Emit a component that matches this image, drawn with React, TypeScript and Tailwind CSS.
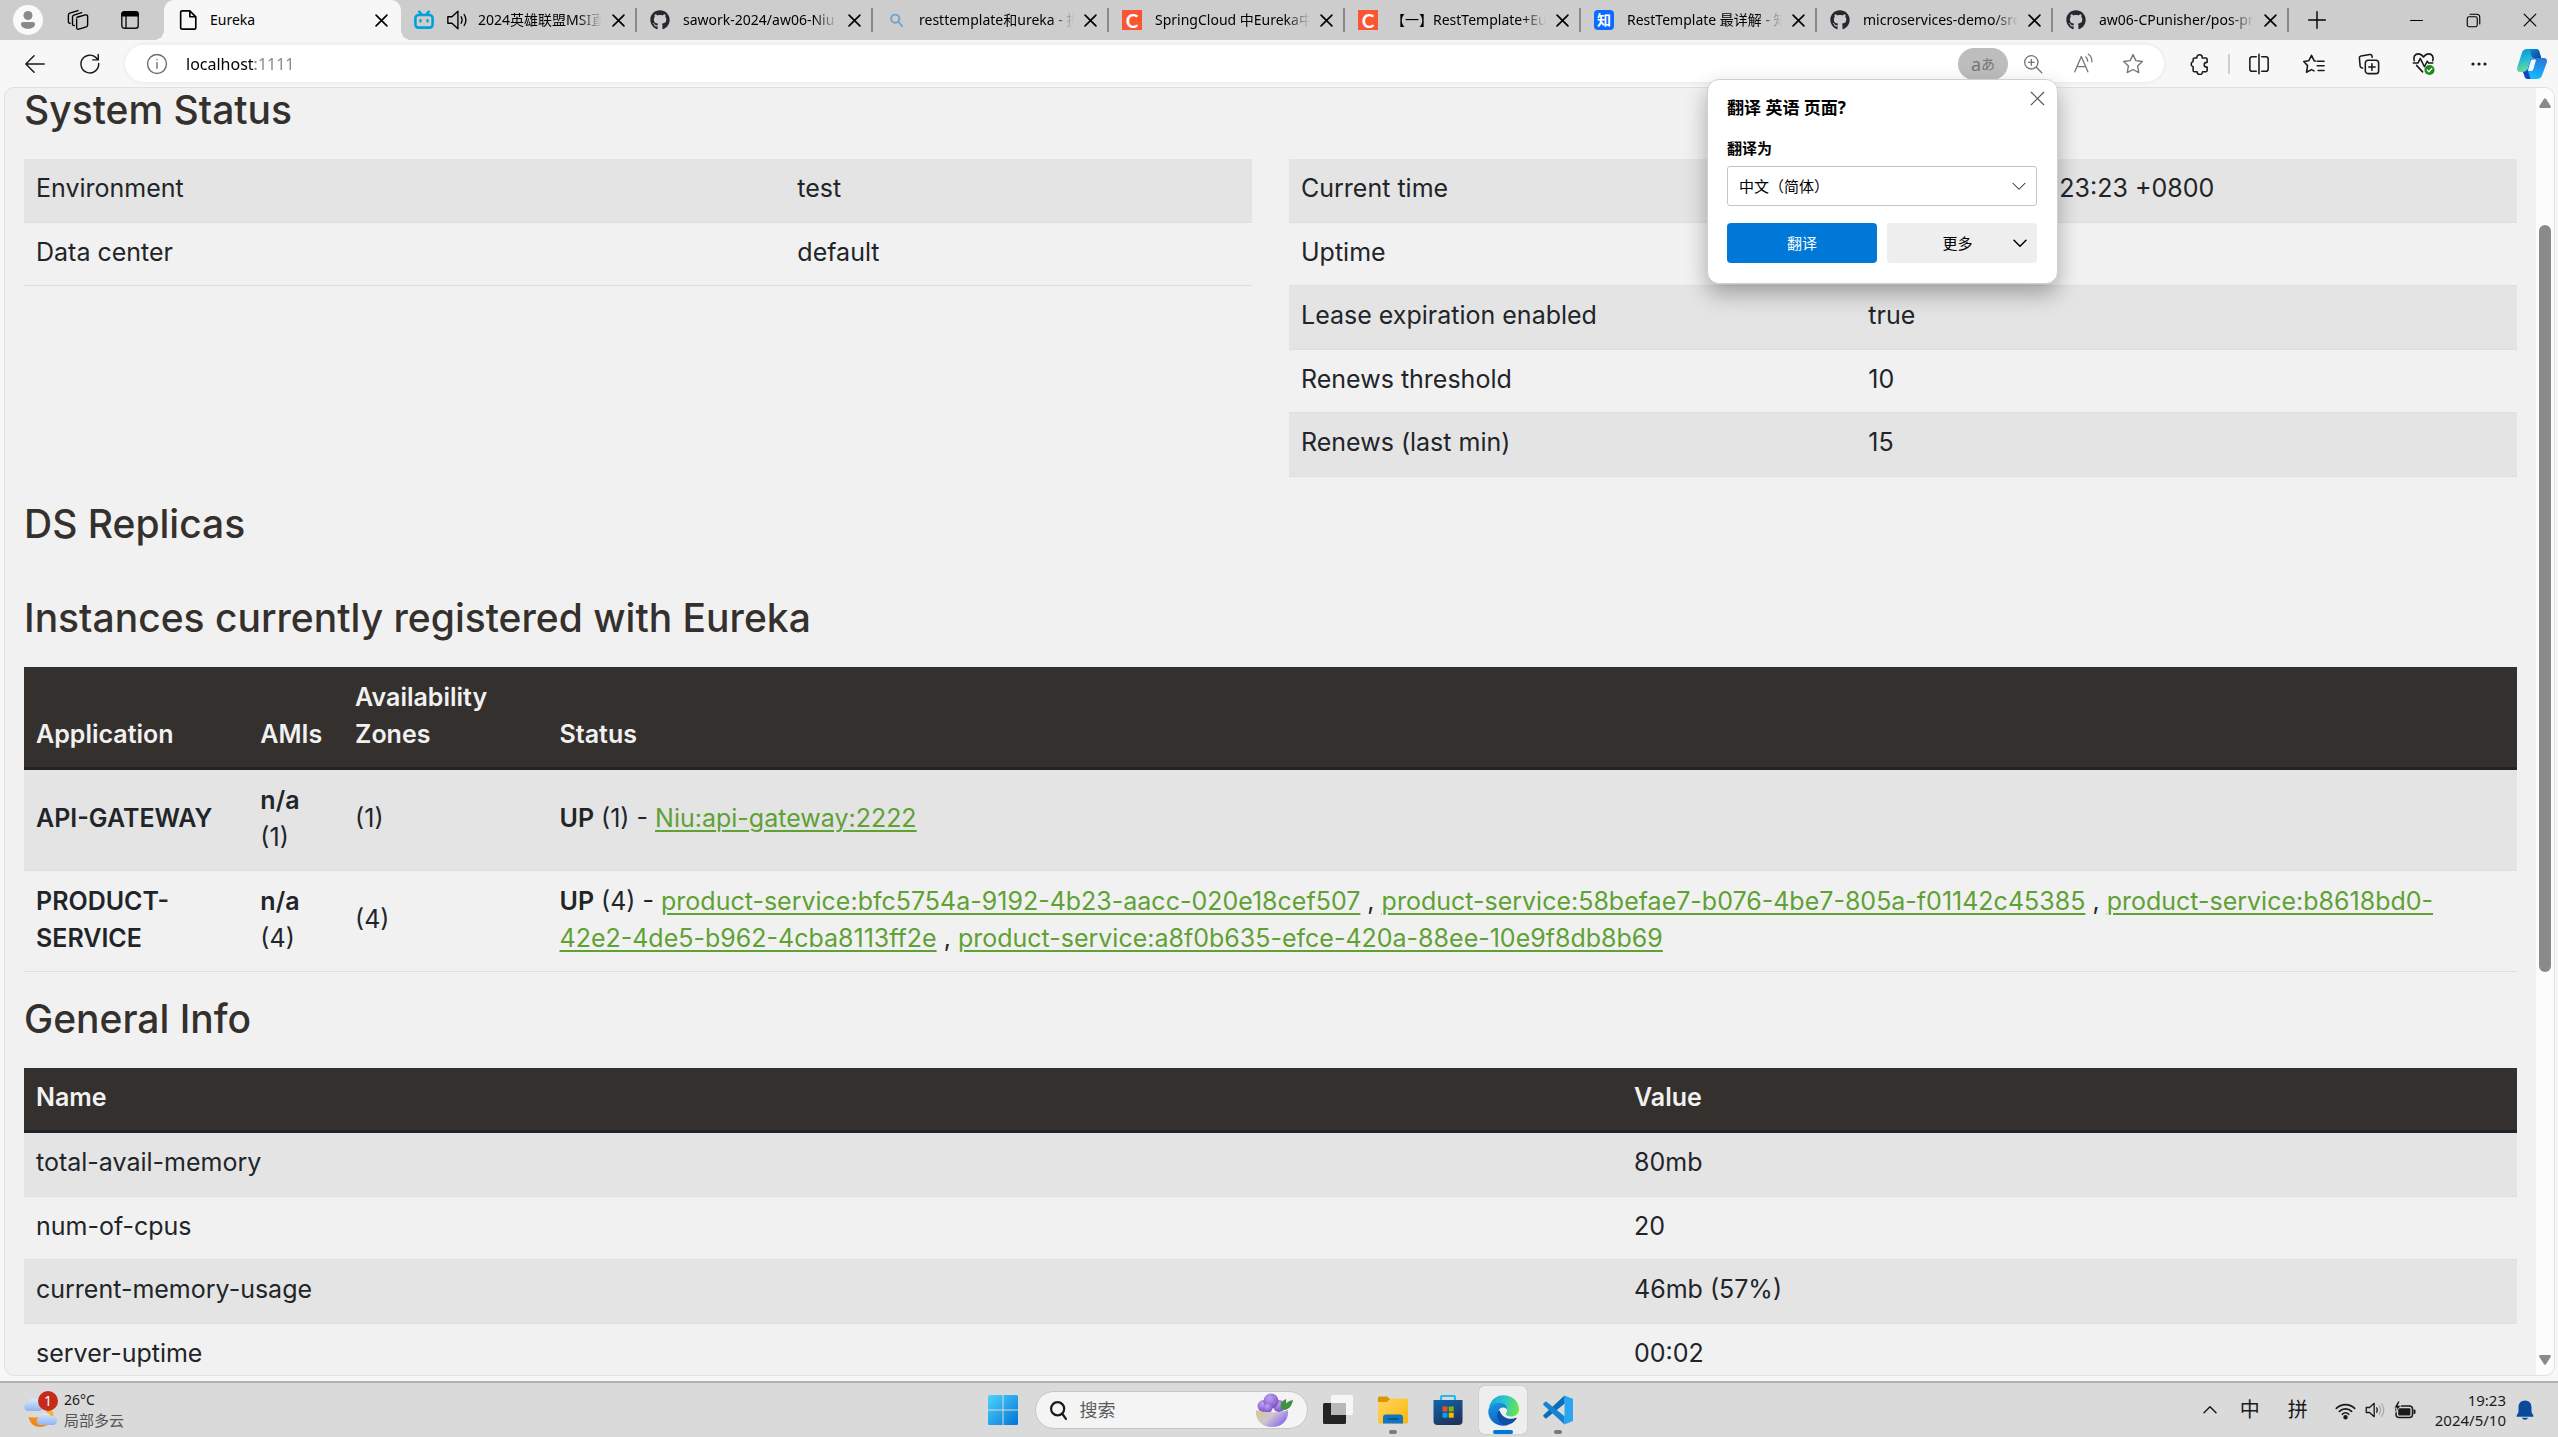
import React from 'react';
import type { ReactNode } from 'react';
import { FaGithub } from 'react-icons/fa';

const UI = "font-['Noto_Sans','Noto_Sans_CJK_SC',sans-serif]";

function Line({ children, size = 'size-[22px]', w = 1.4 }: { children: ReactNode; size?: string; w?: number }) {
  return (
    <svg viewBox="0 0 24 24" className={size} fill="none" stroke="currentColor" strokeWidth={w} strokeLinecap="round" strokeLinejoin="round" aria-hidden="true">
      {children}
    </svg>
  );
}

const Cross = ({ size = 'size-[13px]', w = 3 }: { size?: string; w?: number }) => (
  <Line size={size} w={w}>
    <path d="M2 2l20 20M22 2L2 22" />
  </Line>
);

/* ---------- tab strip ---------- */

const Bilibili = () => (
  <svg viewBox="0 0 20 20" className="size-5 shrink-0" fill="none" stroke="#00a1d6" strokeWidth="2.6" strokeLinecap="round" aria-hidden="true">
    <path d="M5.3 1.8l2 2.4M14.7 1.8l-2 2.4" />
    <rect x="1.4" y="5" width="17.2" height="12.6" rx="3" />
    <path d="M6.5 10v1.6M13.5 10v1.6" strokeWidth="2.2" />
  </svg>
);

const Sound = () => (
  <Line size="size-[22px] shrink-0" w={1.5}>
    <path d="M2 8.5h4.5L13 2.5v19l-6.500-6H2z" />
    <path d="M16.500 8.500c1.300 2.200 1.300 4.800 0 7M19.800 6c2.300 3.600 2.300 8.400 0 12" />
  </Line>
);

const Csdn = () => <span className="grid size-5 shrink-0 place-items-center bg-[#fc5531] font-['Lato',sans-serif] text-[19px] leading-none font-bold text-white">C</span>;
const Zhihu = () => <span className="grid size-5 shrink-0 place-items-center rounded-[4px] bg-[#0a6cff] text-sm leading-none font-bold text-white">知</span>;
const Github = () => <FaGithub className="size-5 shrink-0 text-[#24292f]" />;
const SearchFav = () => (
  <span className="grid size-5 shrink-0 place-items-center text-[#6fa3cf]">
    <Line size="size-[15px]" w={3}>
      <circle cx="10" cy="9" r="6.500" />
      <path d="M15 14l6 7" />
    </Line>
  </span>
);
const PageFav = () => (
  <Line size="size-[22px] shrink-0" w={1.8}>
    <path d="M4 3.500C4 2.500 4.800 2 5.500 2H14l6.500 6.500V20.500c0 .9-.7 1.500-1.500 1.500H5.500C4.600 22 4 21.400 4 20.500zM14 2v6.500h6.500" />
  </Line>
);

const TABS: { title: string; icon: ReactNode; sound?: boolean }[] = [
  { title: '2024英雄联盟MSI直', icon: <Bilibili />, sound: true },
  { title: 'sawork-2024/aw06-Niu', icon: <Github /> },
  { title: 'resttemplate和ureka - 搜', icon: <SearchFav /> },
  { title: 'SpringCloud 中Eureka中', icon: <Csdn /> },
  { title: '【一】RestTemplate+Eu', icon: <Csdn /> },
  { title: 'RestTemplate 最详解 - 知', icon: <Zhihu /> },
  { title: 'microservices-demo/src', icon: <Github /> },
  { title: 'aw06-CPunisher/pos-pr', icon: <Github /> },
];

function TabStrip() {
  return (
    <header className="flex h-10 shrink-0 items-stretch bg-[#cdcdcd] pl-[3px] text-sm text-black">
      <button aria-label="Profile" className="grid w-[50px] shrink-0 place-items-center">
        <svg viewBox="0 0 30 30" className="size-[30px]" aria-hidden="true">
          <circle cx="15" cy="15" r="15" fill="#fafafa" />
          <circle cx="15" cy="10.500" r="4.500" fill="#8a8a8a" />
          <path d="M8 19c0-1.200.9-2 2-2h10c1.100 0 2 .8 2 2 0 3.200-3.200 4.800-7 4.800S8 22.200 8 19z" fill="#8a8a8a" />
        </svg>
      </button>
      <button aria-label="Workspaces" className="grid w-[50px] shrink-0 place-items-center">
        <Line w={1.500}>
          <path d="M11 9l9-2.500c1.500-.4 2.500.4 2.500 1.500v9.500c0 1-.5 1.600-1.400 1.900L13 22c-1.500.4-2.500-.4-2.500-1.500V10.800" />
          <path d="M8 18c-1.200.3-2-.4-2-1.500V8.500c0-1 .6-1.600 1.500-1.900L16 4" />
          <path d="M3.500 15.500C2.300 15.700 1.500 15 1.500 14V6.500c0-1 .6-1.600 1.500-1.900L12 1.700" />
        </Line>
      </button>
      <button aria-label="Tab actions" className="grid w-[54px] shrink-0 place-items-center">
        <svg viewBox="0 0 20 20" className="size-5" aria-hidden="true">
          <rect x="1.800" y="1.800" width="16.400" height="16.400" rx="2.500" fill="none" stroke="#111" strokeWidth="1.400" />
          <path d="M1.200 6.500V4c0-1.600 1.200-2.800 2.800-2.800h12c1.600 0 2.800 1.200 2.800 2.800v2.500z" fill="#000" />
          <path d="M6 6v12" stroke="#111" strokeWidth="1.400" />
        </svg>
      </button>

      <nav aria-label="Tabs" className="ml-[7px] flex min-w-0 items-stretch">
        <div className="relative flex w-[237px] items-center rounded-t-[10px] bg-[#f7f7f7] pl-[13px]">
          <span className="absolute bottom-0 -left-[10px] size-[10px] bg-[radial-gradient(circle_at_0_0,#cdcdcd_10px,#f7f7f7_10px)]" />
          <span className="absolute -right-[10px] bottom-0 size-[10px] bg-[radial-gradient(circle_at_100%_0,#cdcdcd_10px,#f7f7f7_10px)]" />
          <PageFav />
          <button className="ml-[11px] flex-1 text-left">Eureka</button>
          <button aria-label="Close tab" className="mr-1 grid h-8 w-8 place-items-center">
            <Cross />
          </button>
        </div>
        {TABS.map((t) => (
          <div key={t.title} className="flex w-[236px] min-w-0 items-center pl-[13px]">
            {t.icon}
            {t.sound && (
              <span className="ml-3 flex">
                <Sound />
              </span>
            )}
            <button className={`${t.sound ? 'ml-[10px]' : 'ml-[13px]'} min-w-0 flex-1 overflow-hidden text-left whitespace-nowrap [mask-image:linear-gradient(to_right,black_calc(100%-24px),transparent)]`}>{t.title}</button>
            <button aria-label={`Close ${t.title}`} className="mr-[4px] ml-[3px] grid h-8 w-[26px] shrink-0 place-items-center">
              <Cross />
            </button>
            <span className="h-6 w-[2px] bg-[#8a8a8a]" />
          </div>
        ))}
      </nav>
      <button aria-label="New tab" className="grid w-14 shrink-0 place-items-center">
        <Line size="size-5" w={1.700}>
          <path d="M12 2v20M2 12h20" />
        </Line>
      </button>
      <div className="ml-auto flex shrink-0">
        <button aria-label="Minimize" className="grid w-[57px] place-items-center">
          <Line size="size-[13px]" w={2}>
            <path d="M1 12h22" />
          </Line>
        </button>
        <button aria-label="Restore" className="grid w-[57px] place-items-center">
          <Line size="size-[15px]" w={1.800}>
            <rect x="2" y="6" width="16" height="16" rx="3" />
            <path d="M6.500 2H17c3 0 5 2 5 5v10.500" />
          </Line>
        </button>
        <button aria-label="Close window" className="grid w-14 place-items-center">
          <Cross size="size-[14px]" w={2} />
        </button>
      </div>
    </header>
  );
}

/* ---------- address bar ---------- */

const Copilot = () => (
  <svg viewBox="0 0 30 32" className="h-8 w-[30px]" aria-hidden="true">
    <defs>
      <linearGradient id="cpA" x1="0" y1="0" x2="0.300" y2="1">
        <stop offset="0" stopColor="#0b8fd6" />
        <stop offset="0.500" stopColor="#22b8d8" />
        <stop offset="1" stopColor="#6fe08a" />
      </linearGradient>
      <linearGradient id="cpB" x1="0.600" y1="0" x2="0.300" y2="1">
        <stop offset="0" stopColor="#2a78d8" />
        <stop offset="0.600" stopColor="#1aa4f5" />
        <stop offset="1" stopColor="#12c2ff" />
      </linearGradient>
      <linearGradient id="cpC" x1="0" y1="0" x2="1" y2="1">
        <stop offset="0" stopColor="#0a8bd8" />
        <stop offset="1" stopColor="#0b3f9c" />
      </linearGradient>
    </defs>
    <path d="M10 1h9c2 0 3 1.200 3.500 3l1.700 6H16c-2 0-3 1-3.500 3l-2.200 8c-.6 2-1.800 3-3.800 3H3c-2.500 0-3.400-2-2.800-4.500L5 4.500C5.700 2.200 7.500 1 10 1z" fill="url(#cpA)" />
    <path d="M13 1h6c2 0 3 1.200 3.500 3l1.700 6H18c-2.500 0-3.500-1-4-3z" fill="url(#cpC)" />
    <path d="M20 31h-9c-2 0-3-1.200-3.500-3L6 23.800c2 0 3.600-.8 4.300-2.800l2.200-8c.5-2 1.500-3 3.500-3h11c2.500 0 3.400 2 2.800 4.500L25 27.500c-.7 2.300-2.500 3.500-5 3.500z" fill="url(#cpB)" />
    <path d="M13.500 31H11c-2 0-3-1.200-3.500-3L6 23.800c2 0 3.500-.8 4.300-2.800z" fill="#1644c4" />
    <path d="M15.500 11.500h2.300c.9 0 1.200.6.900 1.500l-2.300 8c-.4 1.300-1 2-2.300 2h-2c-.8 0-1.100-.6-.8-1.500l2.300-8c.3-1.300.9-2 1.900-2z" fill="#f4fbff" />
  </svg>
);

function AddressBar() {
  const box = 'grid w-[55px] place-items-center';
  return (
    <div className="flex h-[47px] shrink-0 items-center bg-[#f7f7f7] text-[#1a1a1a]">
      <button aria-label="Back" className="ml-[7px] grid w-[55px] place-items-center">
        <Line w={1.600}>
          <path d="M11 3L2 12l9 9M2 12h20" />
        </Line>
      </button>
      <button aria-label="Refresh" className={box}>
        <Line w={1.600}>
          <path d="M21.500 11.500A9.700 9.700 0 1 1 19 5.500L20.800 7.500M21 1.500v6h-6" />
        </Line>
      </button>
      <div className="ml-2 flex h-[37px] flex-1 items-center rounded-full bg-white pr-[6px] pl-[21px] shadow-[0_0_5px_rgba(0,0,0,0.08)]">
        <span className="text-[#6b6b6b]">
          <Line w={1.500}>
            <circle cx="12" cy="12" r="10.300" />
            <path d="M12 10.500v6M12 7.200v.2" />
          </Line>
        </span>
        <input
          aria-label="Address"
          defaultValue="localhost:1111"
          className="ml-[18px] min-w-0 flex-1 bg-[linear-gradient(to_right,#000_69px,#858585_69px)] bg-clip-text text-base text-transparent outline-none"
        />
        <div className="flex items-center text-[#767676]">
          <button aria-label="Translate" className="flex h-8 w-[50px] items-center justify-center rounded-full bg-[#bdbdbd]">
            <span className="text-lg leading-none">a</span>
            <span className="text-sm leading-none">あ</span>
          </button>
          <button aria-label="Zoom" className="grid w-[50px] place-items-center">
            <Line size="size-5" w={1.600}>
              <circle cx="10" cy="10" r="8" />
              <path d="M16 16l6.500 6.500M10 6.500v7M6.500 10h7" />
            </Line>
          </button>
          <button aria-label="Read aloud" className="grid w-[50px] place-items-center">
            <Line size="size-[21px]" w={1.500}>
              <path d="M2 21.500L9.500 4l7.500 17.500M4.700 15.500h9.600M14.500 4.500c1.500 1 2.300 2.800 2.300 4.800M17.500 1.500c2.800 1.800 4.300 5 4 8.500" />
            </Line>
          </button>
          <button aria-label="Favorite" className="grid w-[50px] place-items-center">
            <Line w={1.500}>
              <path d="M12 1.800l3.100 6.500 7.100 1-5.200 5 1.300 7.100L12 18l-6.300 3.400L7 14.300l-5.200-5 7.100-1z" />
            </Line>
          </button>
        </div>
      </div>
      <button aria-label="Extensions" className={`ml-2 ${box}`}>
        <Line w={1.700}>
          <path d="M8.500 5.500V5a3 3 0 0 1 6 0v.5h3.800c.9 0 1.500.6 1.500 1.500v3.200h-.6a2.600 2.600 0 0 0 0 5.200h.6V19c0 .9-.6 1.500-1.500 1.500h-3.500a3 3 0 0 1-6 0H6c-.9 0-1.500-.6-1.500-1.500v-4a2.900 2.900 0 0 1 0-5.600V7c0-.9.6-1.500 1.500-1.500z" />
        </Line>
      </button>
      <span className="mx-px h-5 w-[2px] bg-[#cfcfcf]" />
      <button aria-label="Split screen" className={box}>
        <Line w={1.700}>
          <path d="M9 4H4.500C3.100 4 2 5.100 2 6.500v11C2 18.900 3.100 20 4.500 20H9M15 4h4.500C20.900 4 22 5.100 22 6.500v11c0 1.400-1.100 2.500-2.500 2.500H15M12 1.500v21" />
        </Line>
      </button>
      <button aria-label="Favorites" className={box}>
        <Line w={1.700}>
          <path d="M15.500 9H23M15.500 14H23M16.500 19H23" />
          <path d="M13.500 8.800l-1.300-.2L9.300 2.500 6.400 8.400l-5.600.9 4.200 4.500-1.200 7.200 5.500-2.900 2.700 1.400" />
        </Line>
      </button>
      <button aria-label="Collections" className={box}>
        <Line w={1.700}>
          <rect x="8" y="8" width="14.500" height="14.500" rx="3" />
          <path d="M15.200 11.700v7M11.700 15.200h7M5 16.500l-1.500-.7c-.7-.4-1-1-1.200-1.700L1.500 5.500C1.400 4.300 2 3.500 3.200 3.300L13 1.600c1.200-.2 2 .5 2.200 1.600l.3 1.500" />
        </Line>
      </button>
      <button aria-label="Browser essentials" className={box}>
        <svg viewBox="0 0 24 26" className="h-6 w-[23px]" fill="none" stroke="currentColor" strokeWidth="1.700" strokeLinecap="round" strokeLinejoin="round" aria-hidden="true">
          <path d="M2 9.500C.5 5 3 2 6.300 2c2.300 0 4.300 1.300 5.700 3.500C13.400 3.300 15.400 2 17.700 2 21 2 23.500 5 22 9.500M4.500 14.500L11 21.500" />
          <path d="M1 12h5l2.500-5 4.500 9 3-6 1.500 2H22" />
          <circle cx="18.500" cy="19.500" r="5.500" fill="#1a8a1a" stroke="none" />
          <path d="M16 19.600l1.800 1.800 3.200-3.600" stroke="#fff" strokeWidth="1.500" />
        </svg>
      </button>
      <button aria-label="More tools" className={box}>
        <svg viewBox="0 0 16 4" className="h-1 w-4" fill="currentColor" aria-hidden="true">
          <circle cx="2" cy="2" r="1.600" />
          <circle cx="8" cy="2" r="1.600" />
          <circle cx="14" cy="2" r="1.600" />
        </svg>
      </button>
      <button aria-label="Copilot" className="grid w-[52px] place-items-center">
        <Copilot />
      </button>
    </div>
  );
}

/* ---------- translate popup ---------- */

const Chevron = ({ w = 1.500 }: { w?: number }) => (
  <Line size="size-4" w={w}>
    <path d="M3 8l9 9 9-9" />
  </Line>
);

function TranslatePopup() {
  return (
    <section
      aria-label="Translate"
      className="absolute top-[79px] right-[500px] flex w-[351px] flex-col rounded-xl border border-[#d0d0d0] bg-white pr-5 pb-5 pl-[19px] text-[15px] text-black shadow-[0_10px_22px_rgba(0,0,0,0.3)]"
    >
      <div className="flex h-[55px] items-center justify-between">
        <h2 className="text-[17px] font-bold">翻译 英语 页面?</h2>
        <button aria-label="Close" className="-mt-[18px] -mr-2 text-[#555]">
          <Cross size="size-[15px]" w={1.800} />
        </button>
      </div>
      <label htmlFor="lang" className="h-[31px] leading-[26px] font-bold">
        翻译为
      </label>
      <div className="relative">
        <select id="lang" className="h-10 w-full appearance-none rounded-[3px] border border-[#c4c4c4] bg-white pl-[11px]">
          <option>中文（简体）</option>
        </select>
        <span className="pointer-events-none absolute top-3 right-[10px]">
          <Chevron />
        </span>
      </div>
      <div className="mt-[17px] grid grid-cols-2 gap-[10px]">
        <button className="h-10 rounded-[4px] bg-[#0078d7] text-white">翻译</button>
        <button className="flex h-10 items-center rounded-[4px] bg-[#eeeeee] pr-[9px]">
          <span className="flex-1 pl-4">更多</span>
          <Chevron w={2.200} />
        </button>
      </div>
    </section>
  );
}

/* ---------- Eureka page ---------- */

const H = 'mt-[25px] mb-[27px] text-[39px] leading-[44px] font-medium text-[#34302d]';
const TABLE = 'w-full table-fixed border-separate border-spacing-0 text-left';
const TD = 'border-b border-[#dedee2] px-3 pt-[11px] pb-[14px] font-normal';
const TH = 'border-b-[3px] border-[#212529] bg-[#34302d] px-3 pt-[11px] pb-[14px] text-left align-bottom font-semibold text-[#f1f1f1]';
const ROW = 'odd:bg-[#e4e4e4] odd:h-16 even:h-[63px]';

function KeyValue({ rows, first }: { rows: [string, string][]; first: string }) {
  return (
    <tbody>
      {rows.map(([k, v]) => (
        <tr key={k} className={ROW}>
          <td className={`${TD} ${first} align-top`}>{k}</td>
          <td className={`${TD} align-top`}>{v}</td>
        </tr>
      ))}
    </tbody>
  );
}

const APPS = [
  { name: 'API-GATEWAY', n: 1, links: ['Niu:api-gateway:2222'] },
  {
    name: 'PRODUCT-SERVICE',
    n: 4,
    links: [
      'product-service:bfc5754a-9192-4b23-aacc-020e18cef507',
      'product-service:58befae7-b076-4be7-805a-f01142c45385',
      'product-service:b8618bd0-42e2-4de5-b962-4cba8113ff2e',
      'product-service:a8f0b635-efce-420a-88ee-10e9f8db8b69',
    ],
  },
];

function EurekaPage() {
  return (
    <main className="min-w-0 flex-1 overflow-hidden px-[19px] font-['Inter',sans-serif] text-[25px] leading-[37px] text-[#212529]">
      <h1 className="mb-[27px] text-[39px] leading-[44px] font-medium text-[#34302d]">System Status</h1>
      <div className="flex items-start gap-[37px]">
        <table className={TABLE}>
          <KeyValue first="w-[62%]" rows={[['Environment', 'test'], ['Data center', 'default']]} />
        </table>
        <table className={TABLE}>
          <KeyValue
            first="w-[46.2%]"
            rows={[
              ['Current time', '2024-05-10T19:23:23 +0800'],
              ['Uptime', '00:02'],
              ['Lease expiration enabled', 'true'],
              ['Renews threshold', '10'],
              ['Renews (last min)', '15'],
            ]}
          />
        </table>
      </div>
      <section className="pt-[25px] pb-[25px]">
        <h1 className="text-[39px] leading-[44px] font-medium text-[#34302d]">DS Replicas</h1>
      </section>
      <h1 className={H}>Instances currently registered with Eureka</h1>
      <table className={TABLE}>
        <thead>
          <tr className="h-[103px]">
            <th className={`${TH} w-[9%]`}>Application</th>
            <th className={`${TH} w-[3.8%]`}>AMIs</th>
            <th className={`${TH} w-[8.2%]`}>Availability Zones</th>
            <th className={TH}>Status</th>
          </tr>
        </thead>
        <tbody>
          {APPS.map((a) => (
            <tr key={a.name} className="h-[101px] odd:bg-[#e4e4e4]">
              <td className={TD}>
                <b className="font-semibold">{a.name}</b>
              </td>
              <td className={TD}>
                <b className="block font-semibold">n/a</b>({a.n})
              </td>
              <td className={TD}>({a.n})</td>
              <td className={TD}>
                <b className="font-semibold">UP</b> ({a.n}) -{' '}
                {a.links.map((l, i) => (
                  <React.Fragment key={l}>
                    {i > 0 && ' , '}
                    <a href="#info" className="text-[#5fa134] underline decoration-2 underline-offset-[3px]">
                      {l}
                    </a>
                  </React.Fragment>
                ))}
              </td>
            </tr>
          ))}
        </tbody>
      </table>
      <h1 className={H}>General Info</h1>
      <table className={TABLE}>
        <thead>
          <tr>
            <th className={`${TH} w-[64.1%]`}>Name</th>
            <th className={TH}>Value</th>
          </tr>
        </thead>
        <KeyValue
          first=""
          rows={[
            ['total-avail-memory', '80mb'],
            ['num-of-cpus', '20'],
            ['current-memory-usage', '46mb (57%)'],
            ['server-uptime', '00:02'],
          ]}
        />
      </table>
    </main>
  );
}

function ScrollBar() {
  return (
    <div className="flex w-[18px] shrink-0 flex-col items-center bg-[#fcfcfc] py-[10px]">
      <svg viewBox="0 0 12 10" className="h-[10px] w-3" fill="#8a8a8a" aria-hidden="true">
        <path d="M5 .8Q6 -.4 7 .8L11.600 8Q12.200 9.800 10.800 10H1.200Q-.2 9.800.4 8z" />
      </svg>
      <div className="flex w-3 flex-1 flex-col">
        <div className="flex-[117]" />
        <div className="flex-[748] rounded-full bg-[#8a8a8a]" />
        <div className="flex-[384]" />
      </div>
      <svg viewBox="0 0 12 10" className="h-[10px] w-3 rotate-180" fill="#8a8a8a" aria-hidden="true">
        <path d="M5 .8Q6 -.4 7 .8L11.600 8Q12.200 9.800 10.800 10H1.200Q-.2 9.800.4 8z" />
      </svg>
    </div>
  );
}

/* ---------- taskbar ---------- */

const Weather = () => (
  <span className="relative block h-[38px] w-[38px]">
    <svg viewBox="0 0 38 38" className="size-[38px]" aria-hidden="true">
      <defs>
        <linearGradient id="cloud" x1="0" y1="0" x2="0" y2="1">
          <stop offset="0" stopColor="#dbe9ff" />
          <stop offset="1" stopColor="#8fb4ee" />
        </linearGradient>
        <linearGradient id="moon" x1="1" y1="0" x2="0" y2="1">
          <stop offset="0" stopColor="#ffb52b" />
          <stop offset="1" stopColor="#ee7d0c" />
        </linearGradient>
      </defs>
      <path d="M4 20a4.200 4.200 0 0 1 .6-8 5.500 5.500 0 0 1 10.500-1A4.700 4.700 0 0 1 17 20z" fill="url(#cloud)" />
      <path d="M24 18c0 6-6 10-18.500 8 1.500 6.500 5.500 10 11.500 10 8 0 13.500-5.500 13.500-12 0-2.500-1.500-5-3.500-6z" fill="url(#moon)" />
      <path d="M17 34a4 4 0 0 1 .4-7.900 5.500 5.500 0 0 1 10.400-1A4.500 4.500 0 0 1 31 34z" fill="url(#cloud)" />
    </svg>
    <span className="absolute top-0 left-[15px] grid size-5 place-items-center rounded-full bg-[#c42b1c] text-sm leading-none text-white">1</span>
  </span>
);

const Start = () => (
  <svg viewBox="0 0 30 30" className="size-[30px]" aria-hidden="true">
    <defs>
      <linearGradient id="win" x1="0" y1="0" x2="1" y2="1">
        <stop offset="0" stopColor="#4fd4ff" />
        <stop offset="1" stopColor="#0273d4" />
      </linearGradient>
    </defs>
    <path d="M1.500 0H14.500V14.500H0V1.500Q0 0 1.500 0zM15.500 0H28.500Q30 0 30 1.500V14.500H15.500zM0 15.500H14.500V30H1.500Q0 30 0 28.500zM15.500 15.500H30V28.500Q30 30 28.500 30H15.500z" fill="url(#win)" />
  </svg>
);

const Berries = () => (
  <svg viewBox="0 0 40 36" className="h-9 w-10" aria-hidden="true">
    <defs>
      <linearGradient id="bowl" x1="0" y1="0" x2="1" y2="0.600">
        <stop offset="0" stopColor="#d8c48c" />
        <stop offset="0.500" stopColor="#cfc6cf" />
        <stop offset="1" stopColor="#8a6cf0" />
      </linearGradient>
      <radialGradient id="berry" cx="0.400" cy="0.300" r="0.800">
        <stop offset="0" stopColor="#c0a2f5" />
        <stop offset="1" stopColor="#7246bd" />
      </radialGradient>
    </defs>
    <circle cx="9.500" cy="14" r="6" fill="url(#berry)" />
    <circle cx="25" cy="14" r="6" fill="url(#berry)" />
    <circle cx="17" cy="9" r="7.500" fill="url(#berry)" />
    <circle cx="14" cy="16" r="4.500" fill="url(#berry)" />
    <path d="M27 17c-1-6 1-8 5-10 1 5-1 8-4 10zM29 18c1-5 4-9 10-10-1 6-4 9-8 10z" fill="#3f9141" />
    <path d="M2 18c4 3 27 3 32 0 1 10-6 17-16 17S1 28 2 18z" fill="url(#bowl)" />
  </svg>
);

const TaskView = () => (
  <svg viewBox="0 0 30 30" className="size-[30px]" aria-hidden="true">
    <rect x="0" y="8" width="23" height="21" rx="1.500" fill="#242424" />
    <rect x="8" y="0" width="22" height="20" rx="1.500" fill="#f6f6f6" />
    <rect x="8" y="8" width="15" height="12" fill="#b8b8b8" />
  </svg>
);

const Folder = () => (
  <svg viewBox="0 0 30 30" className="size-[30px]" aria-hidden="true">
    <defs>
      <linearGradient id="fold" x1="0" y1="0" x2="1" y2="1">
        <stop offset="0" stopColor="#ffd75e" />
        <stop offset="1" stopColor="#fcb50f" />
      </linearGradient>
    </defs>
    <path d="M0 3Q0 1.500 1.500 1.500H9L12 4V8H0z" fill="#dc9600" />
    <path d="M0 7H9L12.500 3.500H28.500Q30 3.500 30 5V27Q30 28.500 28.500 28.500H1.500Q0 28.500 0 27z" fill="url(#fold)" />
    <path d="M5 28.500V22.500Q5 19.500 8 19.500H22Q25 19.500 25 22.500V28.500z" fill="#0f75c4" />
    <path d="M9.500 24H20.500" stroke="#084a86" strokeWidth="1.600" />
  </svg>
);

const Store = () => (
  <svg viewBox="0 0 30 30" className="size-[30px]" aria-hidden="true">
    <defs>
      <linearGradient id="store" x1="0" y1="0" x2="0.500" y2="1">
        <stop offset="0" stopColor="#0d67ae" />
        <stop offset="1" stopColor="#21345f" />
      </linearGradient>
    </defs>
    <path d="M8 7V2.500Q8 1 9.500 1H20.500Q22 1 22 2.500V7" fill="none" stroke="#25b9ee" strokeWidth="2.200" />
    <path d="M.5 5H29.500V26Q29.500 30 25.500 30H4.500Q.5 30 .5 26z" fill="url(#store)" />
    <path d="M9.500 11.500h5v5h-5z" fill="#f25022" />
    <path d="M15.700 11.500h5v5h-5z" fill="#7fba00" />
    <path d="M9.500 17.700h5v5h-5z" fill="#00a4ef" />
    <path d="M15.700 17.700h5v5h-5z" fill="#ffb900" />
  </svg>
);

const Edge = () => (
  <svg viewBox="0 0 30 30" className="size-[31px]" aria-hidden="true">
    <defs>
      <linearGradient id="edT" x1="0" y1="0.300" x2="1" y2="0.500">
        <stop offset="0" stopColor="#1fa5e0" />
        <stop offset="0.500" stopColor="#2cc7cd" />
        <stop offset="1" stopColor="#6be645" />
      </linearGradient>
      <linearGradient id="edL" x1="0" y1="0" x2="0.400" y2="1">
        <stop offset="0" stopColor="#1b9de2" />
        <stop offset="1" stopColor="#0b62c4" />
      </linearGradient>
    </defs>
    <path d="M1 12C2.500 5 8 .3 15 .3 24 .3 30 7 30 13.500c0 4.500-3.500 7.300-7.500 7.300-3.500 0-5.300-1.200-5.300-2.400 0-1 1.300-1.500 1.300-4 0-3-3-6-7.500-6-4 0-7.500 1.300-10 3.600z" fill="url(#edT)" />
    <path d="M.3 15.500C.5 11 5 7.500 10.500 7.500c5 0 8 3.200 8 6.500-1-1.500-2.500-2-4-2-3 0-4.800 2.600-4.800 6 0 5.500 4.300 10 9.300 11-1.300.5-2.700.7-4 .7C6.500 29.700 0 23.500.3 15.500z" fill="url(#edL)" />
    <path d="M11 14.500c-1.500 1.200-2 3-2 5 0 5 4 9.500 9 9.800 4-.8 7.500-3 9.700-6.500.3-.6-.2-1-.8-.7-1.400.7-3 1-4.600 1-5.500 0-9.500-3.100-11.300-8.600z" fill="#0f4fa8" />
  </svg>
);

const VsCode = () => (
  <svg viewBox="0 0 30 30" className="size-[30px]" aria-hidden="true">
    <path d="M21.500 0.500L30 4V26L21.500 29.500z" fill="#2aa5f2" />
    <path d="M21.500 0.500V8.800L3.500 23.200Q2.800 23.700 2 23L.5 21.500Q-.2 20.800.5 20z" fill="#0a6db8" />
    <path d="M21.500 29.500V21.200L3.500 6.800Q2.800 6.300 2 7L.5 8.500Q-.2 9.200.5 10z" fill="#1384d2" />
  </svg>
);

function TaskItem({ label, children, state }: { label: string; children: ReactNode; state?: 'open' | 'active' }) {
  return (
    <button aria-label={label} className="grid w-[55px] place-items-center">
      <span className={`relative grid h-12 w-[48px] place-items-center rounded-[5px] ${state === 'active' ? 'bg-[#eeeeee] shadow-[0_0_1px_rgba(0,0,0,0.4)]' : ''}`}>
        {children}
        {state === 'active' && <span className="absolute bottom-0 h-1 w-5 rounded-full bg-[#0078d7]" />}
        {state === 'open' && <span className="absolute bottom-0 h-1 w-2 rounded-full bg-[#7a7a7a]" />}
      </span>
    </button>
  );
}

function Taskbar() {
  return (
    <footer className="grid h-14 shrink-0 grid-cols-[1fr_auto_1fr] items-center border-t-2 border-[#b0b0b0] bg-[#dadada] text-sm text-[#1a1a1a]">
      <button className="flex items-center gap-[3px] pl-[23px] text-left">
        <Weather />
        <span className="flex flex-col leading-5">
          <span>26°C</span>
          <span className="text-[15px] text-[#555]">局部多云</span>
        </span>
      </button>
      <div className="flex items-center pl-[3px]">
        <button aria-label="Start" className="grid w-[55px] place-items-center">
          <Start />
        </button>
        <label className="mr-[3px] ml-1 flex h-[38px] w-[273px] items-center rounded-full border border-[#c6c6c6] bg-[#f4f4f4] pr-[13px] pl-3">
          <Line size="size-[21px] shrink-0" w={2.500}>
            <circle cx="11" cy="10" r="7.500" />
            <path d="M16.500 16l4 5.500" />
          </Line>
          <input aria-label="搜索" placeholder="搜索" className="ml-[11px] min-w-0 flex-1 bg-transparent text-lg outline-none placeholder:text-[#5c5c5c]" />
          <Berries />
        </label>
        <TaskItem label="Task view">
          <TaskView />
        </TaskItem>
        <TaskItem label="Explorer" state="open">
          <Folder />
        </TaskItem>
        <TaskItem label="Store">
          <Store />
        </TaskItem>
        <TaskItem label="Edge" state="active">
          <Edge />
        </TaskItem>
        <TaskItem label="Code" state="open">
          <VsCode />
        </TaskItem>
      </div>
      <div className="flex items-center justify-end pr-[24px]">
        <button aria-label="Hidden icons" className="mr-[22px]">
          <Line size="size-4" w={2.200}>
            <path d="M3 16l9-9 9 9" />
          </Line>
        </button>
        <button className="mr-[28px] text-xl leading-6">中</button>
        <button className="mr-[27px] text-xl leading-6">拼</button>
        <button aria-label="Network, volume, battery" className="flex items-center gap-[9px]">
          <Line size="size-[21px]" w={1.900}>
            <path d="M1.500 9.500a15 15 0 0 1 21 0M5 13a10 10 0 0 1 14 0M8.300 16.300a5.300 5.300 0 0 1 7.400 0" />
            <circle cx="12" cy="19.800" r="1.600" fill="currentColor" />
          </Line>
          <Line size="size-5" w={1.600}>
            <path d="M1.500 9h4L11 4v16l-5.500-5h-4zM14 9.500c1 1.500 1 3.500 0 5" />
            <path d="M17 7c2 3 2 7 0 10M20 4.500c3 4.500 3 10.500 0 15" stroke="#aaa" />
          </Line>
          <svg viewBox="0 0 22 18" className="h-[18px] w-[22px]" aria-hidden="true">
            <rect x="2" y="5" width="16.500" height="11.500" rx="3" fill="none" stroke="#1a1a1a" strokeWidth="1.500" />
            <rect x="4.200" y="7.200" width="12.200" height="7.200" rx="1" fill="#1a1a1a" />
            <path d="M19.500 8.500h1q1 0 1 1v2.500q0 1-1 1h-1z" fill="#1a1a1a" />
            <path d="M4 0L0 7H3L1.500 11.500 7 4.500H4.200L6 0z" fill="#1a1a1a" stroke="#dadada" strokeWidth="0.800" />
          </svg>
        </button>
        <button className="ml-[19px] text-right text-[15px] leading-5">
          <span className="block">19:23</span>
          <span className="block">2024/5/10</span>
        </button>
        <button aria-label="Notifications" className="ml-[10px]">
          <svg viewBox="0 0 18 20" className="h-5 w-[18px]" fill="#0a4a9c" aria-hidden="true">
            <path d="M9 .5c3.800 0 6.500 2.800 6.500 6.500v5l2 4q.2.700-.6.700H1.100Q.3 16.700.5 16l2-4V7C2.500 3.300 5.200.5 9 .5zM6 17.700h6c-.4 1.300-1.500 2-3 2s-2.600-.7-3-2z" />
          </svg>
        </button>
      </div>
    </footer>
  );
}

export default function App() {
  return (
    <div className={`relative flex h-screen flex-col overflow-hidden bg-[#f7f7f7] ${UI}`}>
      <TabStrip />
      <AddressBar />
      <div className="mr-[3px] mb-[5px] ml-[4px] flex min-h-0 flex-1 overflow-hidden rounded-[10px] border border-[#e0e0e0] bg-[#f1f1f1]">
        <EurekaPage />
        <ScrollBar />
      </div>
      <Taskbar />
      <TranslatePopup />
    </div>
  );
}
